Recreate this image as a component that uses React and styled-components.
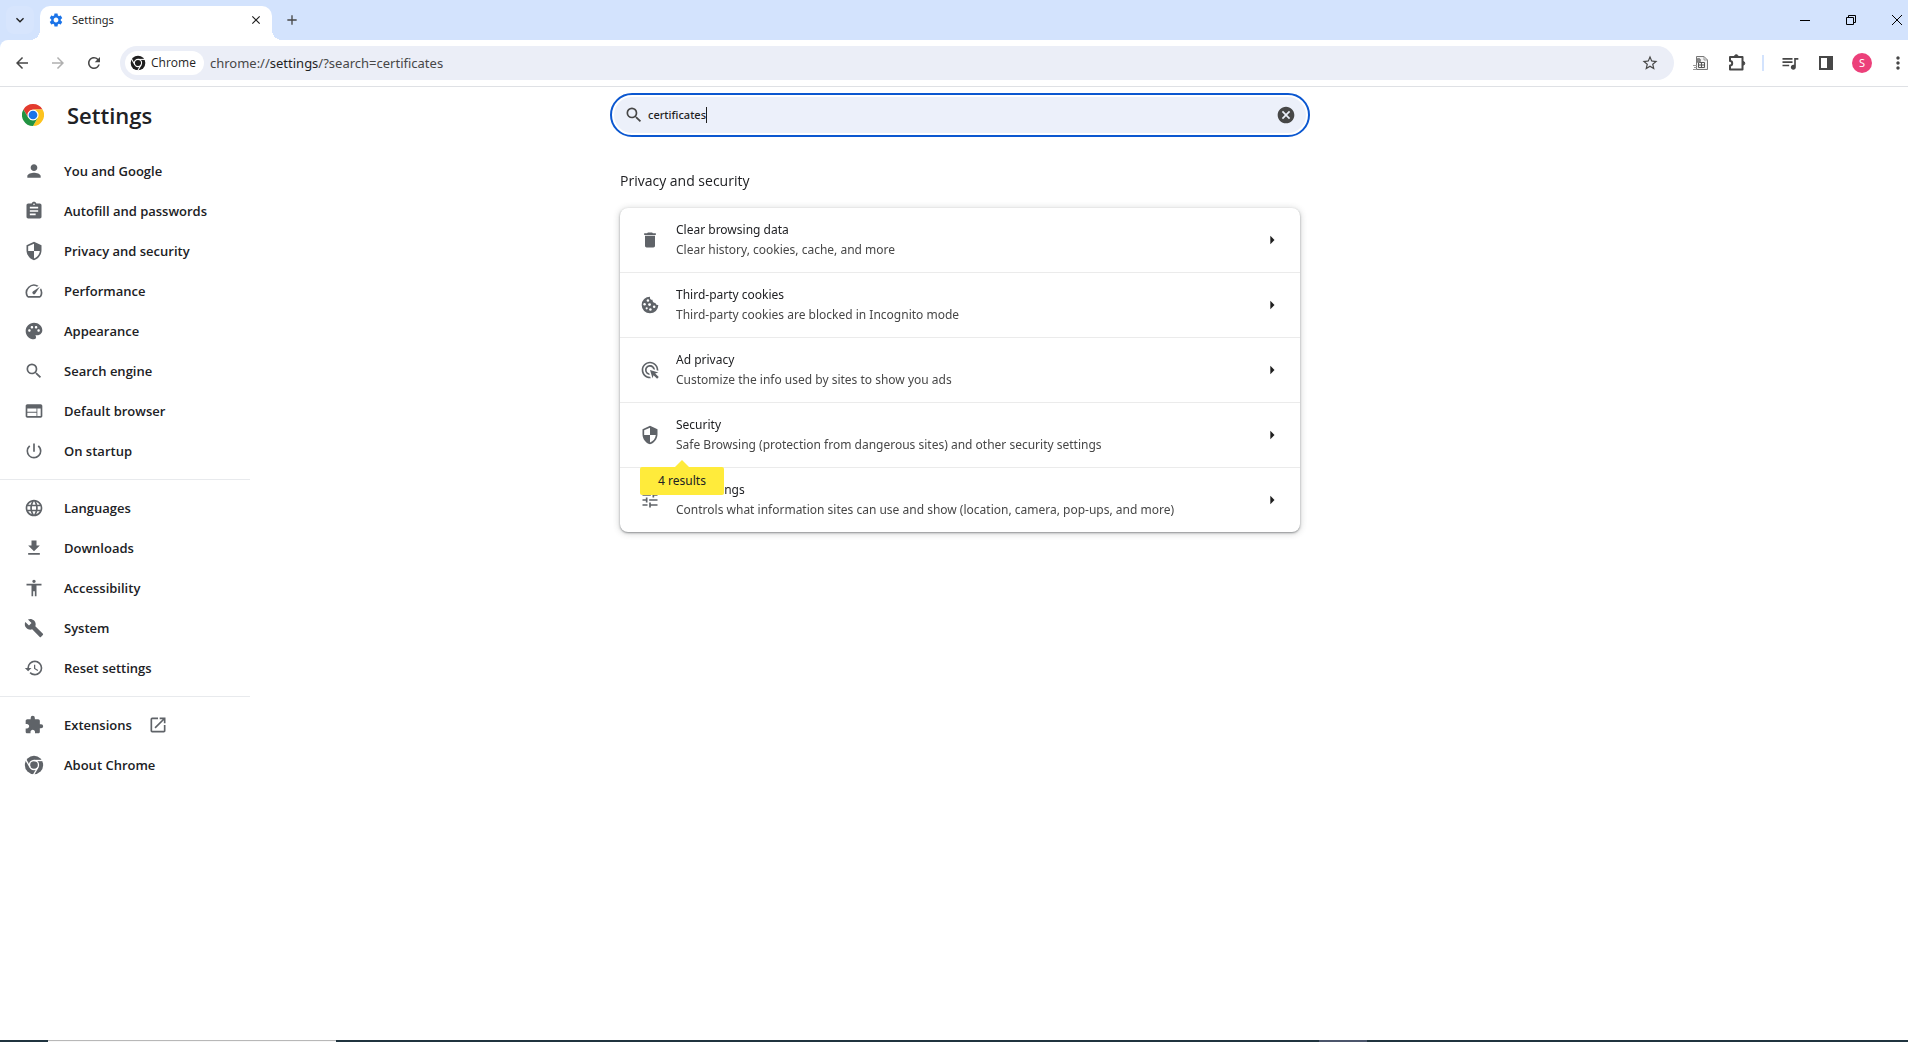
import React, { useState } from "react";
import styled, { createGlobalStyle } from "styled-components";
import {
  MdPerson, MdAssignment, MdSecurity, MdOutlineSpeed, MdPalette, MdSearch, MdWeb,
  MdPowerSettingsNew, MdLanguage, MdAccessibility, MdBuild, MdHistory,
  MdExtension, MdOpenInNew, MdDelete, MdAdsClick, MdTune, MdCancel,
  MdQueueMusic, MdStarOutline, MdArrowBack, MdArrowForward, MdRefresh, MdSettings,
  MdClose, MdAdd, MdMoreVert, MdArrowRight, MdExpandMore,
} from "react-icons/md";

const Global = createGlobalStyle`
  *, *::before, *::after { box-sizing: border-box; }
  body {
    margin: 0;
    background: #fff;
    color: #202124;
    font-family: "Noto Sans", "Open Sans", sans-serif;
    font-size: 12px;
    line-height: 20px;
  }
  button, input { font: inherit; color: inherit; }
  a { color: inherit; text-decoration: none; }
  svg { display: block; flex: none; }
`;

const Shell = styled.div`
  min-height: 100vh;
  display: flex;
  flex-direction: column;
`;

const IconButton = styled.button`
  width: ${(p) => p.$size || 36}px;
  height: ${(p) => p.$height || p.$size || 36}px;
  flex: none;
  display: grid;
  place-items: center;
  padding: 0;
  border: 0;
  border-radius: ${(p) => p.$radius || 0}px;
  background: ${(p) => p.$bg || "transparent"};
  color: ${(p) => p.$color || "#474747"};
`;

/* Tab strip */
const TabStrip = styled.header`
  height: 40px;
  display: flex;
  align-items: center;
  padding-left: 6px;
  background: #d3e3fd;
`;
const Tab = styled.div`
  align-self: flex-end;
  width: 232px;
  height: 34px;
  margin: 0 6px;
  padding: 0 2px 6px 8px;
  display: flex;
  align-items: center;
  gap: 8px;
  position: relative;
  background: #fff;
  border-radius: 10px 10px 0 0;
  color: #1f1f1f;
  &::before, &::after {
    content: "";
    position: absolute;
    bottom: 0;
    width: 10px;
    height: 10px;
  }
  &::before {
    right: 100%;
    background: radial-gradient(circle at 0 0, transparent 10px, #fff 10px);
  }
  &::after {
    left: 100%;
    background: radial-gradient(circle at 100% 0, transparent 10px, #fff 10px);
  }
`;
const TabTitle = styled.span`
  flex: 1;
  font-size: 11px;
`;
const WindowControls = styled.div`
  margin-left: auto;
  margin-right: -12px;
  display: flex;
`;

/* Toolbar */
const ToolbarBack = styled.div`
  background: #d3e3fd;
`;
const Toolbar = styled.div`
  height: 47px;
  display: flex;
  align-items: center;
  padding: 0 0 0 4px;
  background: #fff;
  border-bottom: 1px solid #dfe1e5;
  border-top-left-radius: 8px;
`;
const Omnibox = styled.div`
  flex: 1;
  height: 34px;
  margin: 0 9px 0 8px;
  padding: 0 6px 0 5px;
  display: flex;
  align-items: center;
  border-radius: 17px;
  background: #ebeef7;
`;
const Chip = styled.button`
  height: 24px;
  padding: 0 8px 0 5px;
  display: flex;
  align-items: center;
  gap: 5px;
  border: 0;
  border-radius: 12px;
  background: #fff;
  color: #1f1f1f;
  font-family: "Open Sans", sans-serif;
`;
const Address = styled.span`
  flex: 1;
  padding-left: 6px;
  font-size: 13px;
  color: #474747;
  b { font-weight: 400; color: #1f1f1f; }
`;
const Separator = styled.span`
  width: 2px;
  height: 16px;
  margin: 0 8px 0 7px;
  background: #d3e3fd;
`;
const Avatar = styled.span`
  width: 20px;
  height: 20px;
  display: grid;
  place-items: center;
  border-radius: 50%;
  background: #ec407a;
  color: #fff;
  font-size: 11px;
`;
const MenuButton = styled(IconButton)`
  margin-left: 8px;
`;

/* Settings page */
const Page = styled.div`
  flex: 1;
  display: grid;
  grid-template-columns: 266px minmax(0, 1fr) 254px;
`;
const Side = styled.div`
  width: 250px;
`;
const Brand = styled.div`
  height: 56px;
  padding-left: 22px;
  display: flex;
  align-items: center;
  gap: 23px;
`;
const Title = styled.h1`
  margin: 0;
  font-family: "Open Sans", sans-serif;
  font-size: 22px;
  font-weight: 600;
  line-height: 28px;
`;
const Menu = styled.nav`
  padding: 8px 0;
`;
const MenuGroup = styled.div`
  & + & {
    margin-top: 8px;
    padding-top: 8px;
    border-top: 1px solid #e8eaed;
  }
`;
const MenuLink = styled.a`
  height: 40px;
  padding-left: 24px;
  display: flex;
  align-items: center;
  gap: 16px;
  font-family: "Open Sans", sans-serif;
  font-size: 13px;
  font-weight: 600;
  svg { color: #5f6368; }
  svg:first-child { margin-right: 4px; }
`;
const Main = styled.main`
  width: 100%;
  max-width: 692px;
  margin: 0 auto;
  padding-top: 10px;
`;
const SearchBox = styled.label`
  height: 36px;
  padding: 0 2px 0 10px;
  display: flex;
  align-items: center;
  border-radius: 18px;
  background: #ecf0fa;
  color: #474747;
  outline: 2px solid #0b57d0;
  outline-offset: 2px;
  button { margin-left: auto; }
`;
const SearchInput = styled.input`
  field-sizing: content;
  min-width: 0;
  margin-left: 4px;
  padding: 0;
  border: 0;
  outline: 0;
  background: transparent;
  caret-color: transparent;
  color: #1f1f1f;
  font-size: 11px;
  font-weight: 500;
`;
const Caret = styled.span`
  width: 1px;
  height: 16px;
  background: #1f1f1f;
`;
const Section = styled.section`
  padding: 36px 6px 0;
`;
const SectionTitle = styled.h2`
  margin: 0 0 15px;
  font-family: "Open Sans", sans-serif;
  font-size: 14px;
  font-weight: 400;
  line-height: 24px;
`;
const Card = styled.div`
  border-radius: 8px;
  background: #fff;
  box-shadow: 0 1px 2px rgba(60, 64, 67, 0.5), 0 1px 6px 1px rgba(60, 64, 67, 0.2);
`;
const Row = styled.a`
  position: relative;
  min-height: 64px;
  padding: 0 18px 0 20px;
  display: flex;
  align-items: center;
  gap: 16px;
  & + & {
    min-height: 65px;
    border-top: 1px solid #ebebeb;
  }
  > svg { color: #5f6368; }
  > svg:last-of-type { color: #1f1f1f; }
`;
const RowText = styled.span`
  flex: 1;
  display: flex;
  flex-direction: column;
`;
const RowHint = styled.span`
  color: #474747;
`;
const Bubble = styled.span`
  position: absolute;
  z-index: 1;
  top: 100%;
  left: 20px;
  width: 84px;
  line-height: 28px;
  text-align: center;
  border-radius: 2px;
  background: #ffeb3b;
  color: #202124;
  &::before {
    content: "";
    position: absolute;
    bottom: 100%;
    left: 35px;
    border: 7px solid transparent;
    border-top-width: 0;
    border-bottom-color: #ffeb3b;
  }
`;

/* Edge of the desktop taskbar */
const Taskbar = styled.footer`
  height: 2px;
  display: flex;
  background: #20343f;
`;
const TaskbarItem = styled.span`
  width: ${(p) => p.$width}px;
  margin-left: ${(p) => p.$left}px;
  background: ${(p) => p.$color};
  border-top: 1px solid ${(p) => p.$edge};
`;

const ChromeLogo = () => (
  <svg width="22" height="22" viewBox="0 0 48 48" aria-hidden="true">
    <circle cx="24" cy="24" r="12" fill="#fff" />
    <path fill="#e33b2e" d="M24 12H44.78a23.99 23.99 0 0 0-41.56 0L13.61 30A11.99 11.99 0 0 1 24 12Z" />
    <path fill="#fcc31e" d="M34.39 30 24 48A23.99 23.99 0 0 0 44.78 12H24A11.99 11.99 0 0 1 34.39 30Z" />
    <path fill="#229342" d="M13.61 30 3.22 12A23.99 23.99 0 0 0 24 48L34.39 30a11.99 11.99 0 0 1-20.78 0Z" />
    <circle cx="24" cy="24" r="9.5" fill="#1a73e8" />
  </svg>
);
const ChromeMark = ({ size = 20 }) => (
  <svg width={size} height={size} viewBox="0 0 24 24" fill="none" stroke="#fff" strokeWidth="1.6" aria-hidden="true">
    <circle cx="12" cy="12" r="11" fill="currentColor" stroke="none" />
    <circle cx="12" cy="12" r="5.4" />
    <path d="M12 6.600h11.500" />
    <path d="M12 6.600h11.500" transform="rotate(120 12 12)" />
    <path d="M12 6.600h11.500" transform="rotate(240 12 12)" />
  </svg>
);
const DownloadIcon = ({ size = 20 }) => (
  <svg width={size} height={size} viewBox="0 0 24 24" fill="currentColor" aria-hidden="true">
    <path d="M19 9h-4V3H9v6H5l7 7 7-7zM5 18v2h14v-2H5z" />
  </svg>
);
const CookieIcon = ({ size = 20 }) => (
  <svg width={size} height={size} viewBox="0 0 24 24" fill="currentColor" aria-hidden="true">
    <path d="M12 2A10 10 0 1 0 22 12a3 3 0 0 1-3.500-2.500A3.500 3.500 0 0 1 15 5.800 3.200 3.200 0 0 1 12 2Z" />
    <g fill="#fff">
      <circle cx="9.500" cy="6.500" r="1.500" />
      <circle cx="5.500" cy="11" r="1.500" />
      <circle cx="11.500" cy="11.500" r="1.700" />
      <circle cx="8" cy="16" r="1.300" />
      <circle cx="12.500" cy="17.500" r="1.500" />
      <circle cx="17" cy="14" r="1.500" />
    </g>
  </svg>
);
const PuzzleIcon = () => (
  <svg width="18" height="18" viewBox="0 0 18 18" fill="none" stroke="#474747" strokeWidth="2" aria-hidden="true">
    <path d="M2 3h12.500v12.500H2v-4a2.200 2.200 0 0 0 0-4.400Z" strokeLinejoin="round" />
    <path d="M6.500 2.500a1.800 1.800 0 0 1 3.600 0ZM15 7.500a1.800 1.800 0 0 1 0 3.600Z" fill="#474747" strokeWidth="1" />
  </svg>
);
const PageExtensionIcon = () => (
  <svg width="16" height="16" viewBox="0 0 16 16" fill="none" stroke="#777" aria-hidden="true">
    <path d="M3.500 1.500H11L14.500 5v9.500H3.500Z" fill="#f1f1f1" />
    <path d="M11 1.500V5h3.500M0 10.500h4M1 12.500h3M0 14.500h4" stroke="#999" />
    <path d="M5.500 7.500h6v5h-6ZM8.500 7.500v5M5.500 10h6" stroke="#555" />
    <circle cx="5.500" cy="5.500" r="2" fill="#888" />
  </svg>
);
const SidePanelIcon = () => (
  <svg width="16" height="16" viewBox="0 0 16 16" aria-hidden="true">
    <rect x="2" y="2" width="12" height="12" fill="none" stroke="#474747" strokeWidth="2" />
    <path fill="#474747" d="M9 2h5v12H9z" />
  </svg>
);
const MinimizeIcon = () => (
  <svg width="10" height="10" viewBox="0 0 10 10" aria-hidden="true"><path fill="#000" d="M0 5h10v1H0z" /></svg>
);
const RestoreIcon = () => (
  <svg width="10" height="10" viewBox="0 0 10 10" fill="none" stroke="#000" aria-hidden="true">
    <path d="M.5 2.500h7v7h-7zM2.500 2.500v-2h7v7h-2" />
  </svg>
);
const CloseIcon = () => (
  <svg width="10" height="10" viewBox="0 0 10 10" stroke="#000" aria-hidden="true"><path d="M0 0l10 10M10 0L0 10" /></svg>
);

const menu = [
  [
    ["You and Google", MdPerson],
    ["Autofill and passwords", MdAssignment],
    ["Privacy and security", MdSecurity],
    ["Performance", MdOutlineSpeed],
    ["Appearance", MdPalette],
    ["Search engine", MdSearch],
    ["Default browser", MdWeb],
    ["On startup", MdPowerSettingsNew],
  ],
  [
    ["Languages", MdLanguage],
    ["Downloads", DownloadIcon],
    ["Accessibility", MdAccessibility],
    ["System", MdBuild],
    ["Reset settings", MdHistory],
  ],
  [
    ["Extensions", MdExtension, true],
    ["About Chrome", ChromeMark],
  ],
];

const rows = [
  { title: "Clear browsing data", hint: "Clear history, cookies, cache, and more", Icon: MdDelete },
  { title: "Third-party cookies", hint: "Third-party cookies are blocked in Incognito mode", Icon: CookieIcon },
  { title: "Ad privacy", hint: "Customize the info used by sites to show you ads", Icon: MdAdsClick },
  { title: "Security", hint: "Safe Browsing (protection from dangerous sites) and other security settings", Icon: MdSecurity, results: "4 results" },
  { title: "Site settings", hint: "Controls what information sites can use and show (location, camera, pop-ups, and more)", Icon: MdTune },
];

export default function App() {
  const [query, setQuery] = useState("certificates");
  return (
    <Shell>
      <Global />
      <TabStrip>
        <IconButton aria-label="Search tabs" $size={28} $radius={8} $bg="#d7e5fd" $color="#1f1f1f"><MdExpandMore size={16} /></IconButton>
        <Tab>
          <MdSettings size={16} color="#1a73e8" />
          <TabTitle>Settings</TabTitle>
          <IconButton aria-label="Close tab" $size={28} $color="#1f1f1f"><MdClose size={14} /></IconButton>
        </Tab>
        <IconButton aria-label="New tab" $size={28}><MdAdd size={16} /></IconButton>
        <WindowControls>
          <IconButton aria-label="Minimize" $size={46} $height={40}><MinimizeIcon /></IconButton>
          <IconButton aria-label="Restore" $size={46} $height={40}><RestoreIcon /></IconButton>
          <IconButton aria-label="Close" $size={46} $height={40}><CloseIcon /></IconButton>
        </WindowControls>
      </TabStrip>
      <ToolbarBack>
        <Toolbar>
          <IconButton aria-label="Back"><MdArrowBack size={18} /></IconButton>
          <IconButton aria-label="Forward" $color="#b0b0b0"><MdArrowForward size={18} /></IconButton>
          <IconButton aria-label="Reload"><MdRefresh size={18} /></IconButton>
          <Omnibox>
            <Chip><ChromeMark size={16} />Chrome</Chip>
            <Address>chrome://<b>settings</b>/?search=certificates</Address>
            <IconButton aria-label="Bookmark this tab"><MdStarOutline size={18} /></IconButton>
          </Omnibox>
          <IconButton aria-label="Page extension"><PageExtensionIcon /></IconButton>
          <IconButton aria-label="Extensions"><PuzzleIcon /></IconButton>
          <Separator />
          <IconButton aria-label="Media"><MdQueueMusic size={20} /></IconButton>
          <IconButton aria-label="Side panel"><SidePanelIcon /></IconButton>
          <IconButton aria-label="Profile"><Avatar>S</Avatar></IconButton>
          <MenuButton aria-label="Menu" $size={20}><MdMoreVert size={20} /></MenuButton>
        </Toolbar>
      </ToolbarBack>
      <Page>
        <Side>
          <Brand><ChromeLogo /><Title>Settings</Title></Brand>
          <Menu>
            {menu.map((group) => (
              <MenuGroup key={group[0][0]}>
                {group.map(([label, Icon, external]) => (
                  <MenuLink href="#" key={label}>
                    <Icon size={20} />
                    {label}
                    {external && <MdOpenInNew size={20} />}
                  </MenuLink>
                ))}
              </MenuGroup>
            ))}
          </Menu>
        </Side>
        <Main>
          <SearchBox>
            <MdSearch size={20} />
            <SearchInput autoFocus aria-label="Search settings" value={query} onChange={(e) => setQuery(e.target.value)} />
            <Caret />
            <IconButton aria-label="Clear search" type="button" onClick={() => setQuery("")}><MdCancel size={20} /></IconButton>
          </SearchBox>
          <Section>
            <SectionTitle>Privacy and security</SectionTitle>
            <Card>
              {rows.map(({ title, hint, Icon, results }) => (
                <Row href="#" key={title}>
                  <Icon size={20} />
                  <RowText>
                    <span>{title}</span>
                    <RowHint>{hint}</RowHint>
                  </RowText>
                  <MdArrowRight size={20} />
                  {results && <Bubble>{results}</Bubble>}
                </Row>
              ))}
            </Card>
          </Section>
        </Main>
      </Page>
      <Taskbar>
        <TaskbarItem $left={48} $width={288} $color="#f7f7f7" $edge="#b8b8b8" />
        <TaskbarItem $left={983} $width={48} $color="#4c566c" $edge="#4c566c" />
      </Taskbar>
    </Shell>
  );
}
